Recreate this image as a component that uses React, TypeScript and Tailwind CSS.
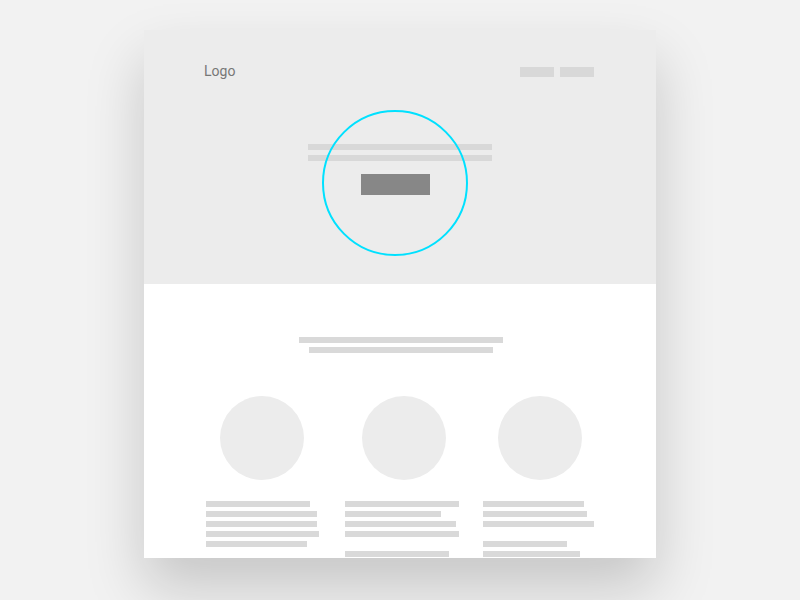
import React from "react";

const Bar = ({ w, mt = 4 }: { w: number; mt?: number }) => (
  <div className="h-[6px] bg-[#d9d9d9]" style={{ width: w, marginTop: mt }} />
);

export default function App() {
  const cols = [
    { circleMl: 14, w: 139, lines: [{ w: 104, mt: 0 }, { w: 111 }, { w: 111 }, { w: 113 }, { w: 101 }] },
    { circleMl: 17, w: 138, lines: [{ w: 114, mt: 0 }, { w: 96 }, { w: 111 }, { w: 114 }, { w: 104, mt: 14 }] },
    { circleMl: 15, w: 130, lines: [{ w: 101, mt: 0 }, { w: 104 }, { w: 111 }, { w: 84, mt: 14 }, { w: 97 }] },
  ];
  return (
    <div className="w-full h-[600px] bg-[#f2f2f2] flex justify-center pt-[30px] overflow-hidden" style={{ fontFamily: "Roboto, 'Liberation Sans', sans-serif" }}>
      <div className="relative w-[512px] h-[528px] flex flex-col overflow-hidden bg-white shadow-[0_30px_55px_rgba(0,0,0,0.18)]">
        <div className="h-[254px] bg-[#ececec] flex flex-col shrink-0">
          <div className="flex justify-between items-start pt-[31px] pl-[60px] pr-[62px]">
            <span className="text-[14px] leading-[20px] text-[#777777]">Logo</span>
            <div className="flex gap-[6px] mt-[6px]">
              <div className="w-[34px] h-[10px] bg-[#d8d8d8]" />
              <div className="w-[34px] h-[10px] bg-[#d8d8d8]" />
            </div>
          </div>
          <div className="flex flex-col items-center mt-[63px]">
            <div className="w-[184px] h-[6px] bg-[#d8d8d8]" />
            <div className="w-[184px] h-[6px] bg-[#d8d8d8] mt-[5px]" />
            <div className="w-[69px] h-[21px] bg-[#878787] mt-[13px] -ml-[9px]" />
          </div>
        </div>
        <div className="flex flex-col">
          <div className="flex flex-col items-center pt-[53px] ml-[2px]">
            <div className="w-[204px] h-[6px] bg-[#d9d9d9]" />
            <div className="w-[184px] h-[6px] bg-[#d9d9d9] mt-[4px]" />
          </div>
          <div className="flex pl-[62px] mt-[43px]">
            {cols.map((c, i) => (
              <div key={i} className="flex flex-col shrink-0" style={{ width: c.w }}>
                <div className="w-[84px] h-[84px] rounded-full bg-[#ececec]" style={{ marginLeft: c.circleMl }} />
                <div className="mt-[21px] flex flex-col">
                  {c.lines.map((l, j) => (
                    <Bar key={j} w={l.w} mt={l.mt} />
                  ))}
                </div>
              </div>
            ))}
          </div>
        </div>
        <div className="absolute left-[178px] top-[80px] w-[146px] h-[146px] rounded-full border-2 border-[#00e1ff]" />
      </div>
    </div>
  );
}
